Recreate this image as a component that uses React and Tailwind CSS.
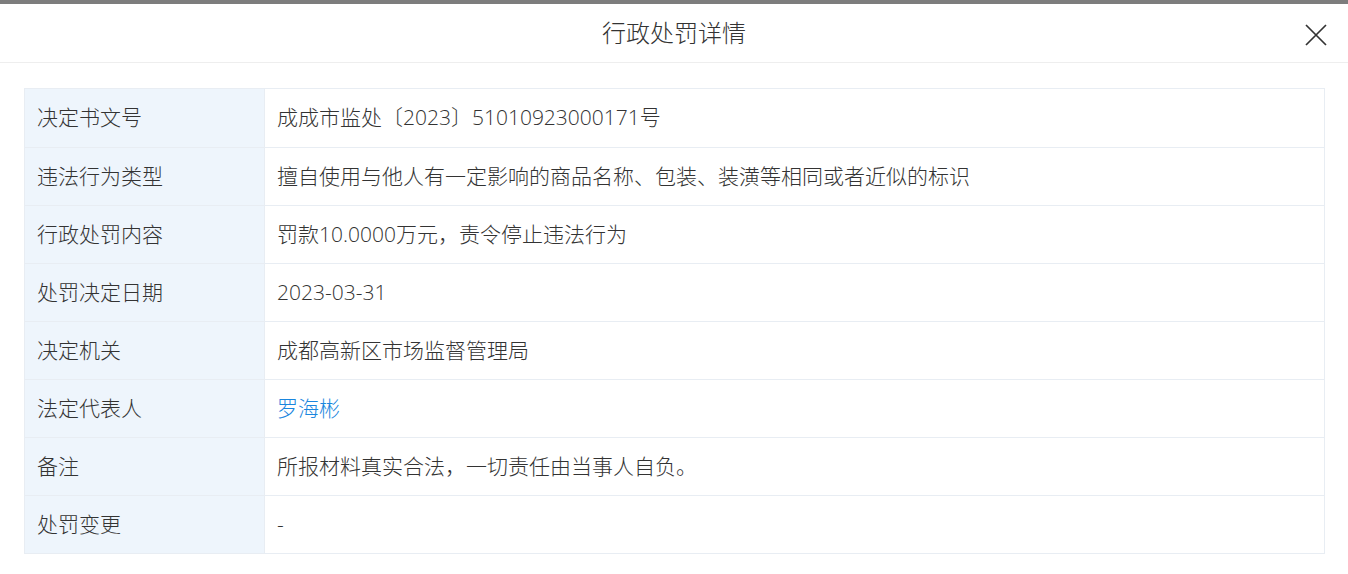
const rows = [
  { label: "决定书文号", value: "成成市监处〔2023〕51010923000171号" },
  { label: "违法行为类型", value: "擅自使用与他人有一定影响的商品名称、包装、装潢等相同或者近似的标识" },
  { label: "行政处罚内容", value: "罚款10.0000万元，责令停止违法行为" },
  { label: "处罚决定日期", value: "2023-03-31" },
  { label: "决定机关", value: "成都高新区市场监督管理局" },
  { label: "法定代表人", value: "罗海彬", link: true },
  { label: "备注", value: "所报材料真实合法，一切责任由当事人自负。" },
  { label: "处罚变更", value: "-" },
];

export default function App() {
  return (
    <div className="h-[574px] overflow-hidden bg-white font-['Open_Sans','Noto_Sans_CJK_SC',sans-serif] text-[#333]">
      {/* dimmed page behind the modal */}
      <div className="h-[4px] bg-[#7d7d7d]" />

      <div className="bg-white">
        {/* Header */}
        <div className="relative flex h-[59px] items-center justify-center border-b border-[#eeeeee]">
          <h2 className="text-[24px] font-light text-[#333]">行政处罚详情</h2>
          <button className="absolute right-[21px] top-[20px] text-[#333]">
            <svg width="22" height="22" viewBox="0 0 22 22" fill="none" stroke="currentColor" strokeWidth="1.7">
              <path d="M1 1L21 21M21 1L1 21" />
            </svg>
          </button>
        </div>

        {/* Body */}
        <div className="px-6 pt-[25px]">
          <div className="mr-[-1px] border border-[#e8edf3]">
            {rows.map((row, i) => (
              <div
                key={row.label}
                className={`flex h-[58px] ${i > 0 ? "border-t border-[#e8edf3]" : ""}`}
              >
                <div className="flex w-[240px] shrink-0 items-center border-r border-[#e8edf3] bg-[#eef5fc] pl-3 text-[21px] font-light">
                  {row.label}
                </div>
                <div
                  className={`flex items-center pl-3 text-[21px] font-light ${
                    row.link ? "text-[#1a86de]" : "text-[#333]"
                  }`}
                >
                  {row.value}
                </div>
              </div>
            ))}
          </div>
        </div>
      </div>
    </div>
  );
}
